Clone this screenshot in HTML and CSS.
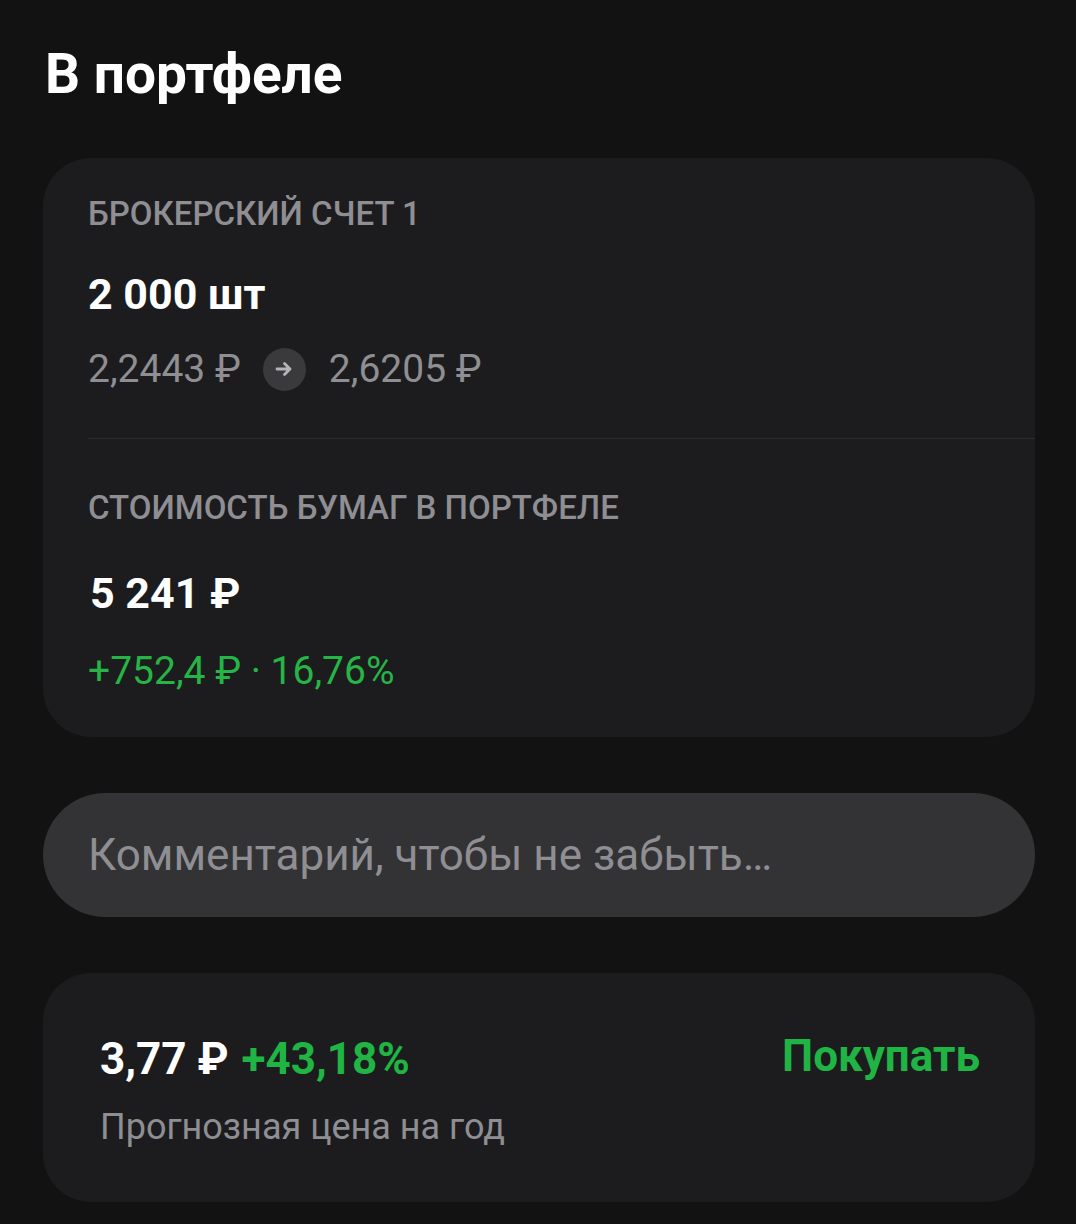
FILE: index.html
```html
<!DOCTYPE html>
<html lang="ru">
<head>
    <meta charset="UTF-8">
    <meta name="viewport" content="width=device-width, initial-scale=1.0">
    <title>В портфеле</title>
    <link rel="stylesheet" href="styles.css">
</head>
<body>
    <div class="page">
        <h1 class="title">В портфеле</h1>

        <div class="card holdings">
            <div class="section">
                <div class="label">БРОКЕРСКИЙ СЧЕТ 1</div>
                <div class="amount qty">2 000 шт</div>
                <div class="price-row">
                    <span>2,2443 ₽</span>
                    <span class="arrow">
                        <svg width="20" height="20" viewBox="0 0 20 20">
                            <path d="M3 10h13M10.5 4.5l5.5 5.5-5.5 5.5" fill="none" stroke="#b4b4b9" stroke-width="2.8" stroke-linecap="round" stroke-linejoin="round"/>
                        </svg>
                    </span>
                    <span>2,6205 ₽</span>
                </div>
            </div>
            <div class="divider"></div>
            <div class="section">
                <div class="label label-value">СТОИМОСТЬ БУМАГ В ПОРТФЕЛЕ</div>
                <div class="amount total">5 241 ₽</div>
                <div class="profit">+752,4 ₽ · 16,76%</div>
            </div>
        </div>

        <div class="comment">Комментарий, чтобы не забыть…</div>

        <div class="card forecast">
            <div class="forecast-main">
                <div class="forecast-price">3,77 ₽ <span class="green">+43,18%</span></div>
                <div class="forecast-note">Прогнозная цена на год</div>
            </div>
            <div class="buy">Покупать</div>
        </div>
    </div>
</body>
</html>
```

FILE: styles.css
```css
body {
    margin: 0;
    background-color: #121212;
    color: #fff;
    font-family: Roboto, "Noto Sans", sans-serif;
}
.page {
    padding: 42px 41px 20px 43px;
}
.title {
    margin: 0 0 52px 2px;
    font-size: 55px;
    line-height: 64px;
    font-weight: 700;
}
.card {
    background-color: #1c1c1e;
    border-radius: 48px;
}
.holdings {
    padding: 36px 0 42px 0;
}
.section {
    padding-left: 45px;
}
.label {
    font-size: 33px;
    line-height: 40px;
    font-weight: 500;
    color: #8e8e93;
}
.amount {
    font-size: 43px;
    line-height: 50px;
    font-weight: 700;
}
.qty {
    margin-top: 35px;
}
.price-row {
    margin-top: 26px;
    display: flex;
    align-items: center;
    gap: 22px;
    font-size: 39px;
    line-height: 48px;
    color: #8e8e93;
}
.arrow {
    width: 43px;
    height: 43px;
    border-radius: 50%;
    background-color: #3a3a3c;
    display: flex;
    align-items: center;
    justify-content: center;
    margin-left: 0;
    margin-right: 1px;
}
.divider {
    margin: 45px 0 0 45px;
    height: 1px;
    background-color: #2c2c2e;
}
.label-value {
    margin-top: 49px;
}
.total {
    margin-top: 40px;
    margin-left: 2px;
}
.profit {
    margin-top: 29px;
    font-size: 39px;
    line-height: 48px;
    color: #27b446;
}
.comment {
    margin-top: 56px;
    height: 124px;
    border-radius: 62px;
    background-color: #333335;
    padding-left: 45px;
    display: flex;
    align-items: center;
    font-size: 44px;
    color: #8e8e93;
}
.forecast {
    margin-top: 56px;
    height: 229px;
    box-sizing: border-box;
    padding: 0 55px 0 57px;
    display: flex;
    align-items: center;
    justify-content: space-between;
}
.forecast-main {
    margin-top: 7px;
}
.forecast-price {
    font-size: 44px;
    line-height: 50px;
    font-weight: 700;
}
.green {
    color: #1fb443;
    margin-left: 2px;
}
.forecast-note {
    margin-top: 21px;
    font-size: 36px;
    line-height: 44px;
    color: #8e8e93;
}
.buy {
    font-size: 44px;
    font-weight: 700;
    color: #1fb443;
    margin-top: -64px;
}
```
